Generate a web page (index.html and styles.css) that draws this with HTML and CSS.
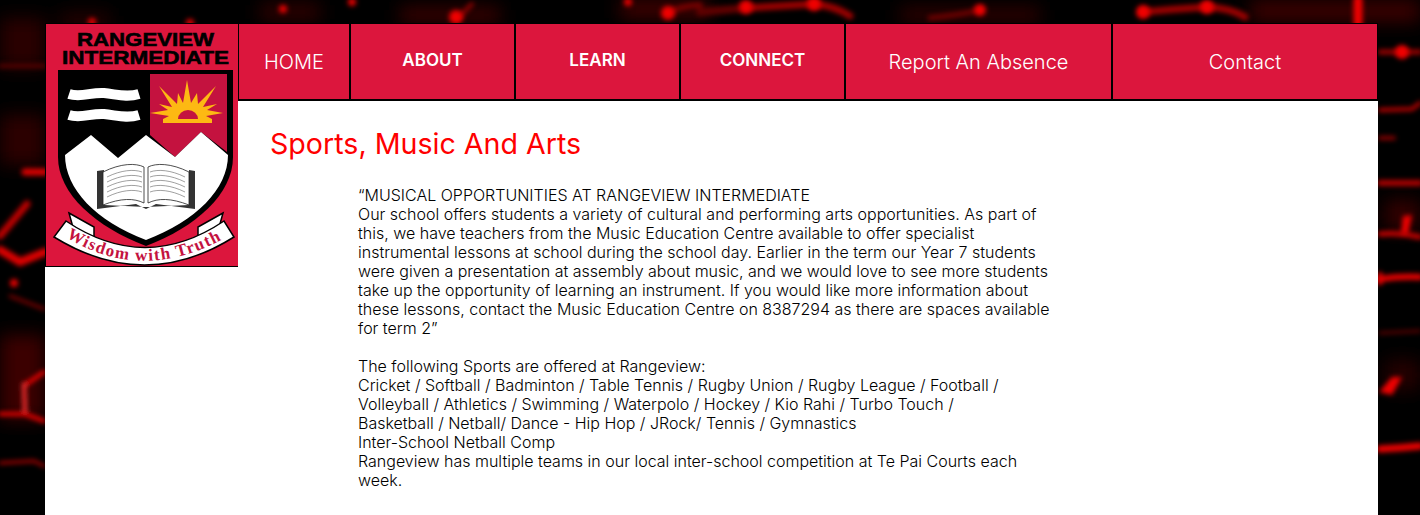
FILE: index.html
```html
<!DOCTYPE html>
<html lang="en">

<head>
  <meta charset="UTF-8">
  <meta name="viewport" content="width=device-width, initial-scale=1.0">
  <title>Sports, Music And Arts</title>
  <link rel="stylesheet" href="styles.css">
</head>

<body>
  <svg class="backdrop" viewBox="0 0 1420 515" aria-hidden="true">
    <defs>
      <filter id="soft" x="-20%" y="-20%" width="140%" height="140%"><feGaussianBlur stdDeviation="2.6" /></filter>
      <filter id="haze" x="-20%" y="-20%" width="140%" height="140%"><feGaussianBlur stdDeviation="9" /></filter>
    </defs>
    <g filter="url(#haze)" fill="#4a0000">
      <rect x="0" y="18" width="45" height="50" opacity=".55" />
      <rect x="0" y="115" width="45" height="50" opacity=".6" />
      <rect x="0" y="335" width="45" height="85" opacity=".8" />
      <rect x="1250" y="0" width="170" height="22" opacity=".8" />
      <rect x="60" y="14" width="50" height="14" opacity=".6" />
      <rect x="260" y="4" width="60" height="16" opacity=".7" />
      <rect x="400" y="8" width="100" height="14" opacity=".9" />
      <rect x="620" y="0" width="90" height="18" opacity=".9" />
      <rect x="900" y="8" width="140" height="14" opacity=".7" />
      <rect x="1385" y="200" width="35" height="30" opacity=".7" />
      <rect x="1385" y="360" width="35" height="30" opacity=".5" />
    </g>
    <g filter="url(#soft)" fill="none" stroke-linecap="round">
      <path d="M746 8 Q780 6 814 4 Q835 6 850 16" stroke="#a00000" stroke-width="7" />
      <path d="M1143 12 Q1175 9 1207 7 Q1230 8 1245 17" stroke="#a00000" stroke-width="7" />
      <path d="M700 12 L746 8" stroke="#600000" stroke-width="8" />
      <path d="M456 20 L472 4" stroke="#900000" stroke-width="4" />
      <path d="M668 13 Q680 6 700 5" stroke="#800000" stroke-width="5" />
      <path d="M930 18 Q960 15 980 10" stroke="#700000" stroke-width="5" />
      <path d="M1358 0 V24" stroke="#f00000" stroke-width="9" />
      <path d="M1380 52 H1420" stroke="#a00000" stroke-width="5" />
      <path d="M1380 110 L1412 109 L1420 103" stroke="#c00000" stroke-width="4" />
      <path d="M1380 138 H1394" stroke="#900000" stroke-width="4" />
      <path d="M1380 183 H1420" stroke="#b00000" stroke-width="6" />
      <path d="M1380 234 Q1400 232 1420 237" stroke="#d00000" stroke-width="5" />
      <path d="M1380 279 Q1400 276 1420 277" stroke="#f00000" stroke-width="6" />
      <path d="M1380 333 L1420 331" stroke="#600000" stroke-width="3" />
      <path d="M1380 449 Q1400 448 1420 446" stroke="#f00000" stroke-width="7" />
      <path d="M25 172 H45" stroke="#e00000" stroke-width="7" />
      <path d="M0 66 H45" stroke="#5a0000" stroke-width="4" />
      <path d="M0 236 L27 204" stroke="#c00000" stroke-width="7" />
      <path d="M0 250 L20 262 L45 252" stroke="#e00000" stroke-width="8" />
      <path d="M10 296 L44 309" stroke="#800000" stroke-width="3" />
      <path d="M25 385 L44 372" stroke="#f00000" stroke-width="4" />
      <path d="M24 384 L25 413" stroke="#ff3030" stroke-width="4" />
      <path d="M0 414 L25 414 L44 421" stroke="#f00000" stroke-width="4" />
      <path d="M0 463 L34 461 L44 466" stroke="#b00000" stroke-width="3" />
    </g>
    <g filter="url(#soft)" fill="#f00000">
      <circle cx="92" cy="22" r="4" />
      <circle cx="190" cy="23" r="4" />
      <circle cx="283" cy="9" r="4" />
      <circle cx="352" cy="2" r="4" />
      <circle cx="456" cy="17" r="7" />
      <circle cx="628" cy="2" r="4" />
      <circle cx="668" cy="13" r="7" />
      <circle cx="746" cy="7" r="7" />
      <circle cx="814" cy="4" r="7" />
      <circle cx="980" cy="10" r="6" />
      <circle cx="1143" cy="12" r="7" />
      <circle cx="1207" cy="7" r="7" />
      <circle cx="1402" cy="52" r="7" />
      <circle cx="14" cy="283" r="4" />
      <polygon points="1403,216 1412,215 1408,234 1401,234" />
      <polygon points="1392,377 1402,377 1392,395 1379,392" />
      <polygon points="1378,272 1382,272 1382,285 1378,285" />
    </g>
  </svg>

  <div class="page">
    <a class="logo" href="#">
      <svg viewBox="0 0 193 243" role="img" aria-label="Rangeview Intermediate crest">
        <text class="crest-name" x="99.5" y="22" text-anchor="middle" textLength="137" lengthAdjust="spacingAndGlyphs">RANGEVIEW</text>
        <text class="crest-name" x="99.5" y="40" text-anchor="middle" textLength="167" lengthAdjust="spacingAndGlyphs">INTERMEDIATE</text>

        <!-- shield -->
        <path d="M12 46 H187 V133 C187 170 150 203 100 222 C50 203 12 170 12 133 Z" fill="#000" />
        <path d="M104 50 H181 V128 L155 108 L129 133 L104 111 Z" fill="#c4123f" />
        <path d="M19 131 L45 111 L72 134 L100 111 L129 133 L155 108 L182 131 C182 165 150 197 100 216 C50 197 19 165 19 131 Z" fill="#fff" />
        <path d="M23 70 C35 74 45 68 58 69 C70 70 80 74 93 70" fill="none" stroke="#fff" stroke-width="10" />
        <path d="M23 91 C35 95 45 89 58 90 C70 91 80 95 93 91" fill="none" stroke="#fff" stroke-width="10" />

        <!-- sun -->
        <path d="M104 89 L122 86 L113 80 L126 83 L113 62 L131 80 L132 69 L137 79 L141 56 L145 79 L151 69 L152 80 L170 62 L157 83 L171 80 L161 86 L177 89 L160 92 L166 95 V99 H117 V95 L123 92 Z" fill="#fdb913" />
        <path d="M132 95 A10 9 0 0 1 152 95 Z" fill="#c4123f" />

        <!-- book -->
        <g transform="translate(0 9)">
          <path d="M51 138 L58 137 V172 L100 174 L143 172 V137 L149 138 V176 L110 171 L100 176 L90 171 L51 176 Z" fill="#333" />
          <path d="M57 139 C75 130 90 130 98 134 V170 C88 165 75 165 57 172 Z" fill="#fff" stroke="#222" stroke-width=".8" />
          <path d="M102 134 C110 130 125 130 143 139 V172 C125 165 112 165 102 170 Z" fill="#fff" stroke="#222" stroke-width=".8" />
          <path class="book-lines" d="M61 144 C75 137 88 136 96 139 M61 149 C75 142 88 141 96 144 M61 154 C75 147 88 146 96 149 M61 159 C75 152 88 151 96 154 M61 164 C75 157 88 156 96 159 M104 139 C112 136 125 137 139 144 M104 144 C112 141 125 142 139 149 M104 149 C112 146 125 147 139 154 M104 154 C112 151 125 152 139 159 M104 159 C112 156 125 157 139 164" />
        </g>

        <!-- ribbon -->
        <path d="M23 189 L48 203 V215 L28 207 Z" fill="#fff" stroke="#000" stroke-width="1.5" />
        <path d="M177 189 L152 203 V215 L172 207 Z" fill="#fff" stroke="#000" stroke-width="1.5" />
        <path d="M20 197 Q99 250 178 197 L188 213 Q99 269 8 213 Z" fill="#fff" stroke="#000" stroke-width="1.5" />
        <path id="ribbon-line" d="M20 213 Q99 262 186 210" fill="none" />
        <text class="crest-motto"><textPath href="#ribbon-line" startOffset="0">Wisdom with Truth</textPath></text>
      </svg>
    </a>

    <div class="main">
      <ul class="nav">
        <li class="nav-home"><a href="#">HOME</a></li>
        <li class="nav-menu"><a href="#">ABOUT</a></li>
        <li class="nav-menu"><a href="#">LEARN</a></li>
        <li class="nav-menu"><a href="#">CONNECT</a></li>
        <li class="nav-absence"><a href="#">Report An Absence</a></li>
        <li class="nav-contact"><a href="#">Contact</a></li>
      </ul>

      <div class="content">
        <h1>Sports, Music And Arts</h1>
        <div class="copy">
          “MUSICAL OPPORTUNITIES AT RANGEVIEW INTERMEDIATE<br>
          Our school offers students a variety of cultural and performing arts opportunities. As part of<br>
          this, we have teachers from the Music Education Centre available to offer specialist<br>
          instrumental lessons at school during the school day. Earlier in the term our Year 7 students<br>
          were given a presentation at assembly about music, and we would love to see more students<br>
          take up the opportunity of learning an instrument. If you would like more information about<br>
          these lessons, contact the Music Education Centre on 8387294 as there are spaces available<br>
          for term 2”<br>
          <br>
          The following Sports are offered at Rangeview:<br>
          Cricket / Softball / Badminton / Table Tennis / Rugby Union / Rugby League / Football /<br>
          Volleyball / Athletics / Swimming / Waterpolo / Hockey / Kio Rahi / Turbo Touch /<br>
          Basketball / Netball/ Dance - Hip Hop / JRock/ Tennis / Gymnastics<br>
          Inter-School Netball Comp<br>
          Rangeview has multiple teams in our local inter-school competition at Te Pai Courts each<br>
          week.
        </div>
      </div>
    </div>
  </div>
</body>

</html>
```

FILE: styles.css
```css
html,
body {
  margin: 0;
  padding: 0;
}

body {
  height: 515px;
  overflow: hidden;
  background-color: #000;
  font-family: "Inter", "Liberation Sans", sans-serif;
  color: #000;
}

ul {
  list-style: none;
  padding: 0;
  margin: 0;
}

a {
  text-decoration: none;
  color: inherit;
}

/* sits behind everything */
.backdrop {
  position: absolute;
  left: 0;
  top: 0;
  width: 1420px;
  height: 515px;
}

.page {
  position: relative;
  display: flex;
  width: 1333px;
  height: 492px;
  margin: 23px 0 0 45px;
  background-color: #fff;
}

.logo {
  display: block;
  flex: none;
  width: 193px;
  height: 244px;
  box-sizing: border-box;
  border: 1px solid #000;
  border-right: 0;
  background-color: #dc163d;
}

.logo svg {
  display: block;
  width: 193px;
  height: 243px;
}

.crest-name {
  font-family: "Liberation Sans", sans-serif;
  font-size: 19px;
  font-weight: bold;
  stroke: #000;
  stroke-width: .6;
}

.crest-motto {
  font-family: "Liberation Serif", serif;
  font-size: 17px;
  font-weight: bold;
  letter-spacing: 1.3px;
  fill: #c4123f;
}

.book-lines {
  fill: none;
  stroke: #777;
  stroke-width: .7;
}

.main {
  flex: 1;
  min-width: 0;
}

.nav {
  display: flex;
  height: 78px;
  box-sizing: border-box;
  border: solid #000;
  border-width: 1px 1px 2px 1px;
  background-color: #dc163d;
  color: #fff;
}

.nav li {
  display: flex;
  align-items: center;
  justify-content: center;
  box-sizing: border-box;
  border-right: 2px solid #000;
  font-size: 20px;
  font-weight: 300;
}

.nav li:last-child {
  border-right: 0;
  flex: 1;
}

.nav-home {
  width: 112px;
}

.nav-menu {
  width: 165px;
  padding-bottom: 3px;
  font-size: 17px !important;
  font-weight: 600 !important;
}

.nav-absence {
  width: 267px;
}

.content {
  padding: 24px 0 0 32px;
}

h1 {
  margin: 0 0 23px;
  font-size: 28.6px;
  font-weight: 400;
  line-height: 38px;
  color: #f00;
}

.copy {
  margin-left: 88px;
  font-size: 16px;
  font-weight: 300;
  line-height: 19px;
  white-space: nowrap;
}
```
